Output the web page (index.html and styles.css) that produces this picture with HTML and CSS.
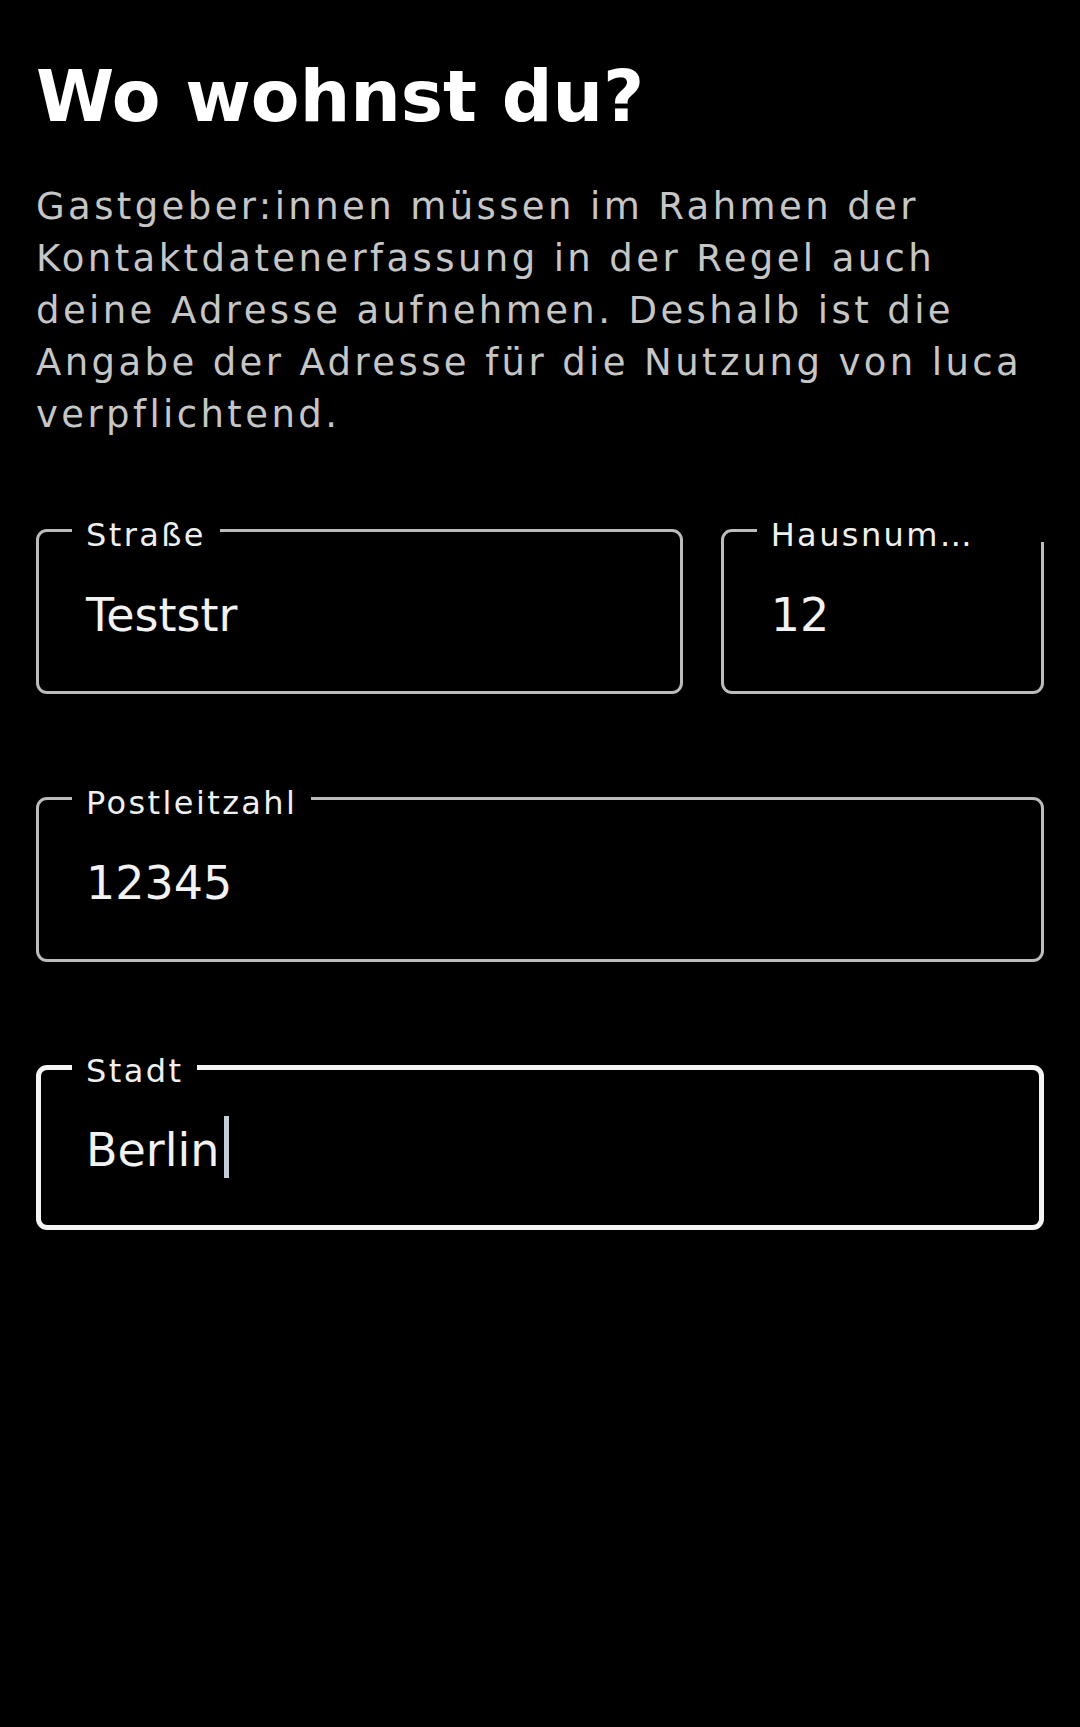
FILE: index.html
```html
<!DOCTYPE html>
<html lang="de">
<head>
<meta charset="utf-8">
<title>Wo wohnst du?</title>
<link rel="stylesheet" href="styles.css">
</head>
<body>
<main class="page">
  <h1 class="title">Wo wohnst du?</h1>
  <p class="intro">Gastgeber:innen müssen im Rahmen der Kontaktdatenerfassung in der Regel auch deine Adresse aufnehmen. Deshalb ist die Angabe der Adresse für die Nutzung von luca verpflichtend.</p>
  <form class="address-form">
    <div class="field">
      <span class="field-label">Straße</span>
      <div class="field-value">Teststr</div>
    </div>
    <div class="field">
      <span class="field-label field-label--clipped">Hausnum…</span>
      <div class="field-value">12</div>
    </div>
    <div class="field field--wide">
      <span class="field-label">Postleitzahl</span>
      <div class="field-value">12345</div>
    </div>
    <div class="field field--wide field--focused">
      <span class="field-label">Stadt</span>
      <div class="field-value">Berlin<span class="caret"></span></div>
    </div>
  </form>
</main>
</body>
</html>
```

FILE: styles.css
```css
html, body {
  margin: 0;
  background: #000;
}

body {
  min-height: 100vh;
  font-family: "DejaVu Sans", "Liberation Sans", sans-serif;
  color: #fff;
}

.page {
  padding: 54px 36px 0;
}

.title {
  margin: 0;
  font-size: 71px;
  font-weight: 700;
  line-height: 85px;
  color: #fff;
}

.intro {
  margin: 42px 0 0;
  font-size: 37px;
  line-height: 52px;
  letter-spacing: 3.4px;
  color: #c6c6c6;
}

.address-form {
  margin-top: 88px;
  display: grid;
  grid-template-columns: 2fr 1fr;
  column-gap: 38px;
  row-gap: 103px;
}

.field {
  position: relative;
  box-sizing: border-box;
  height: 165px;
  border: 3px solid #bcbcbc;
  border-radius: 11px;
  padding: 48px 20px 0 47px;
}

.field--wide {
  grid-column: 1 / -1;
}

.field--focused {
  border: 5px solid #f4f4f4;
  padding: 45px 20px 0 45px;
}

.field-label {
  position: absolute;
  top: -4px;
  left: 33px;
  padding: 0 14px;
  background: #000;
  font-size: 32px;
  line-height: 14px;
  letter-spacing: 2.4px;
  color: #efefef;
  white-space: nowrap;
}

.field-label--clipped {
  right: -4px;
}

.field--focused .field-label {
  top: -6px;
  left: 31px;
}

.field-value {
  font-size: 46px;
  line-height: 70px;
  color: #f2f2f2;
  white-space: nowrap;
}

.caret {
  display: inline-block;
  width: 5px;
  height: 62px;
  margin-left: 4px;
  background: #c5cdd8;
  vertical-align: -12px;
}
```
